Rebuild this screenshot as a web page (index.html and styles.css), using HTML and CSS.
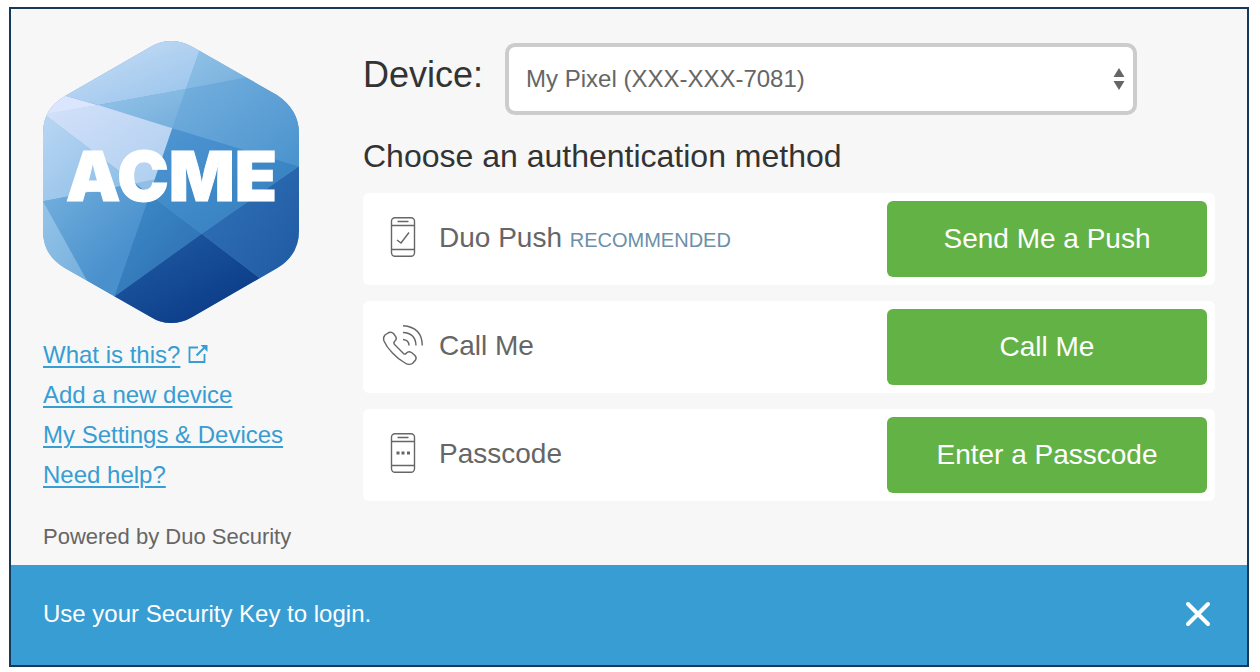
FILE: index.html
```html
<!DOCTYPE html>
<html lang="en">
<head>
    <meta charset="UTF-8">
    <meta name="viewport" content="width=device-width, initial-scale=1.0">
    <title>Two-Factor Authentication</title>
    <link rel="stylesheet" href="styles.css">
</head>
<body>
    <div class="prompt">
        <div class="content">
            <aside class="sidebar">
                <svg class="logo" viewBox="39 33 768 846" role="img" aria-label="ACME">
                    <defs>
                        <clipPath id="hexagon">
                            <path d="M362 50Q390 33 423 33Q457 33 487 50L742 196Q807 240 807 310V602Q807 675 742 714L487 861Q457 879 423 879Q390 879 362 861L103 713Q39 675 39 602V310Q39 235 105 198Z"/>
                        </clipPath>
                        <linearGradient id="top" x1="0" y1="0" x2="1" y2="1"><stop offset="0.2" stop-color="#c3daf5"/><stop offset="0.8" stop-color="#a0c8ed"/></linearGradient>
                        <linearGradient id="sky" x1="0" y1="0" x2="1" y2="1"><stop offset="0" stop-color="#95c4e9"/><stop offset="1" stop-color="#73aedb"/></linearGradient>
                        <linearGradient id="right" x1="0" y1="0" x2="1" y2="1"><stop offset="0" stop-color="#79b2df"/><stop offset="1" stop-color="#4a93ce"/></linearGradient>
                        <linearGradient id="pale" x1="0" y1="0" x2="1" y2="1"><stop offset="0" stop-color="#d5e1fa"/><stop offset="1" stop-color="#aacdee"/></linearGradient>
                        <linearGradient id="left" x1="0" y1="0" x2="1" y2="1"><stop offset="0" stop-color="#bad7f4"/><stop offset="1" stop-color="#87bbe5"/></linearGradient>
                        <linearGradient id="lower" x1="0" y1="0" x2="1" y2="1"><stop offset="0.1" stop-color="#6eacdb"/><stop offset="0.7" stop-color="#4990cd"/></linearGradient>
                        <linearGradient id="center" x1="0" y1="0" x2="1" y2="1"><stop offset="0" stop-color="#5097d3"/><stop offset="0.8" stop-color="#3681c1"/></linearGradient>
                        <linearGradient id="inner" x1="0" y1="0" x2="1" y2="1"><stop offset="0.1" stop-color="#3c8ac7"/><stop offset="0.8" stop-color="#3072b5"/></linearGradient>
                        <linearGradient id="deep" x1="0" y1="0" x2="1" y2="1"><stop offset="0.1" stop-color="#306fb5"/><stop offset="0.9" stop-color="#1f5ba4"/></linearGradient>
                        <linearGradient id="bottom" x1="0" y1="0" x2="1" y2="1"><stop offset="0.1" stop-color="#1f5aa2"/><stop offset="0.8" stop-color="#0b3b87"/></linearGradient>
                    </defs>
                    <g clip-path="url(#hexagon)">
                        <path fill="#6aa9d9" d="M39 33h768v846H39z"/>
                        <path fill="url(#top)" d="M60 33H519L468 177L205 225L105 197Z"/>
                        <path fill="url(#sky)" d="M519 33H700L645 143L468 177Z"/>
                        <path fill="url(#sky)" d="M205 225L468 177L427 295Z"/>
                        <path fill="url(#right)" d="M468 177L645 143L807 110V409L427 295Z"/>
                        <path fill="#dbe5fd" d="M39 180L105 197L205 226L39 254Z"/>
                        <path fill="url(#pale)" d="M39 252L205 225L427 295L359 493L48 257Z"/>
                        <path fill="url(#left)" d="M39 250L316 460L39 514Z"/>
                        <path fill="#92bee5" d="M316 460L375 448L359 493Z"/>
                        <path fill="url(#lower)" d="M39 514L316 460L359 493L252 800L172 754Z"/>
                        <path fill="url(#sky)" d="M39 514L180 769L39 740Z"/>
                        <path fill="url(#center)" d="M427 295L807 409L515 611L359 493Z"/>
                        <path fill="url(#inner)" d="M359 493L515 611L252 800Z"/>
                        <path fill="url(#deep)" d="M807 409V800L690 745L515 611Z"/>
                        <path fill="url(#bottom)" d="M252 800L515 611L690 745L740 879H300Z"/>
                    </g>
                    <text class="logo-text" x="424" y="514" text-anchor="middle">ACME</text>
                </svg>
                <ul class="links">
                    <li>
                        <a href="#">What is this?</a>
                        <svg class="external" viewBox="0 0 20 20" aria-hidden="true">
                            <path d="M10 2.500H1.500V17H16.500V9" fill="none" stroke="currentColor" stroke-width="1.8"/>
                            <path d="M8.500 10.500L16 3" fill="none" stroke="currentColor" stroke-width="2"/>
                            <path d="M12.500 0H19.500V7Z" fill="currentColor"/>
                        </svg>
                    </li>
                    <li><a href="#">Add a new device</a></li>
                    <li><a href="#">My Settings &amp; Devices</a></li>
                    <li><a href="#">Need help?</a></li>
                </ul>
                <p class="powered">Powered by Duo Security</p>
            </aside>

            <main class="main">
                <div class="device">
                    <label for="device">Device:</label>
                    <div class="select">
                        <select id="device">
                            <option>My Pixel (XXX-XXX-7081)</option>
                        </select>
                        <svg class="arrows" viewBox="0 0 12 22" aria-hidden="true">
                            <path d="M6 0L11.500 9H0.500ZM0.500 13H11.500L6 22Z" fill="#666"/>
                        </svg>
                    </div>
                </div>

                <h1>Choose an authentication method</h1>

                <div class="method">
                    <svg class="icon" viewBox="0 0 40 40" aria-hidden="true">
                        <rect x="8.500" y="0.700" width="23" height="38.600" rx="3.500"/>
                        <path d="M8.500 8.500H31.500M8.500 32.500H31.500M14.500 4.500H25.500M14 23L18 26L26 15.500"/>
                    </svg>
                    <span class="name">Duo Push <small>RECOMMENDED</small></span>
                    <button type="button">Send Me a Push</button>
                </div>

                <div class="method">
                    <svg class="icon" viewBox="0 0 40 40" aria-hidden="true">
                        <path d="M2 10L6 7.500Q8.500 6.500 10.500 8.500L13 12Q14 14.500 11.500 16.500Q10 18 12 20L20.500 28.500Q22 30 23.500 28Q25.500 25.700 28.500 27.500L32 30.500Q34 33 32.500 35L29.500 38.500Q26 40.500 22 38Q15 34 9.500 28Q3.500 22 1 16Q-0.300 12.500 2 10Z"/>
                        <path d="M20 14.500Q26 15 26 20.500M20 7.500Q32.500 8 33 20.500M20 0.700Q39 2 39.300 20.500"/>
                    </svg>
                    <span class="name">Call Me</span>
                    <button type="button">Call Me</button>
                </div>

                <div class="method">
                    <svg class="icon" viewBox="0 0 40 40" aria-hidden="true">
                        <rect x="8.500" y="0.700" width="23" height="38.600" rx="3.500"/>
                        <path d="M8.500 8.500H31.500M8.500 32.500H31.500M14.500 4.500H25.500"/>
                        <path d="M13.500 20H16.500M18.500 20H21.500M24 20H27" stroke-width="3"/>
                    </svg>
                    <span class="name">Passcode</span>
                    <button type="button">Enter a Passcode</button>
                </div>
            </main>
        </div>

        <div class="message">
            <span>Use your Security Key to login.</span>
            <button type="button" class="close" aria-label="Close">
                <svg viewBox="0 0 26 26" aria-hidden="true">
                    <path d="M3 3L23 23M23 3L3 23" fill="none" stroke="currentColor" stroke-width="4" stroke-linecap="round"/>
                </svg>
            </button>
        </div>
    </div>
</body>
</html>
```
FILE: styles.css
```css
* {
    box-sizing: border-box;
}

body {
    margin: 0;
    padding: 7px 11px 5px 9px;
    background: #fff;
    color: #666;
    font-family: "Liberation Sans", Helvetica, Arial, sans-serif;
    font-size: 24px;
}

.prompt {
    border: 2px solid #15395a;
    background: #f7f7f7;
}

.content {
    display: flex;
    gap: 64px;
    padding: 32px 32px 0;
}

/* Left column */
.sidebar {
    flex: 0 0 256px;
}

.logo {
    display: block;
    width: 100%;
}

.logo-text {
    fill: #fff;
    stroke: #fff;
    stroke-width: 3px;
    font-family: Inter, sans-serif;
    font-size: 207px;
    font-weight: 900;
}

.links {
    margin: 12px 0 26px;
    padding: 0;
    list-style: none;
    line-height: 40px;
    white-space: nowrap;
}

.links li {
    display: flex;
    align-items: center;
    gap: 8px;
    color: #379dd3;
}

.links a {
    color: #379dd3;
    text-decoration-thickness: 2px;
    text-underline-offset: 3px;
}

.external {
    width: 20px;
    height: 20px;
}

.powered {
    margin: 0;
    padding-bottom: 12px;
    font-size: 22px;
    line-height: 32px;
}

/* Right column */
.main {
    flex: 1;
}

.device {
    display: flex;
    align-items: center;
    gap: 22px;
    margin-top: 2px;
    padding-right: 78px;
}

.device label {
    padding-bottom: 8px;
    color: #333;
    font-size: 36px;
    line-height: 40px;
}

.select {
    position: relative;
    flex: 1;
}

.select select {
    display: block;
    width: 100%;
    height: 72px;
    padding: 0 40px 2px 17px;
    border: 4px solid #ccc;
    border-radius: 10px;
    background: #fff;
    color: #666;
    font: inherit;
    appearance: none;
}

.arrows {
    position: absolute;
    top: 25px;
    right: 12px;
    width: 12px;
    height: 22px;
    pointer-events: none;
}

h1 {
    margin: 20px 0 16px;
    color: #333;
    font-size: 32px;
    font-weight: normal;
    line-height: 42px;
}

.method {
    display: flex;
    align-items: center;
    margin-bottom: 16px;
    padding: 8px 8px 8px 20px;
    border-radius: 6px;
    background: #fff;
    font-size: 28px;
}

.icon {
    width: 40px;
    height: 40px;
    margin: 0 16px 4px 0;
    fill: none;
    stroke: #666;
    stroke-width: 1.4;
    stroke-linecap: butt;
    overflow: visible;
}

.name {
    flex: 1;
    padding-bottom: 2px;
}

.name small {
    color: #6b90a8;
    font-size: 20px;
}

.method button {
    width: 320px;
    height: 76px;
    border: 0;
    border-radius: 6px;
    background: #63b246;
    color: #fff;
    font: inherit;
    cursor: pointer;
}

/* Bottom bar */
.message {
    display: flex;
    align-items: center;
    justify-content: space-between;
    height: 100px;
    padding: 0 36px 2px 32px;
    background: #379dd3;
    color: #fff;
}

.close {
    padding: 0;
    border: 0;
    background: none;
    color: #fff;
    cursor: pointer;
}

.close svg {
    display: block;
    width: 26px;
    height: 26px;
}
```
